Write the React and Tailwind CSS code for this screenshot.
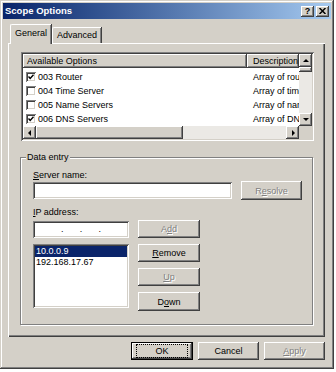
import React from 'react'

const raised =
  'shadow-[inset_-1px_-1px_#404040,inset_1px_1px_#ffffff,inset_-2px_-2px_#808080,inset_2px_2px_#d4d0c8]'
const sunken =
  'shadow-[inset_1px_1px_#808080,inset_-1px_-1px_#ffffff,inset_2px_2px_#404040,inset_-2px_-2px_#d4d0c8]'
const disabledText = 'text-[#808080] [text-shadow:1px_1px_#ffffff]'

function Arrow({ dir }) {
  const pts = {
    up: '1,5 4,2 7,5',
    down: '1,2 4,5 7,2',
    left: '5,1 2,4 5,7',
    right: '3,1 6,4 3,7',
  }
  return (
    <svg width="8" height="8" viewBox="0 0 8 8">
      <polygon points={pts[dir]} fill="#000" />
    </svg>
  )
}

function ScrollBtn({ dir }) {
  return (
    <div className={`w-[13px] h-[13px] shrink-0 bg-[#d4d0c8] flex items-center justify-center ${raised}`}>
      <Arrow dir={dir} />
    </div>
  )
}

function Checkbox({ checked }) {
  return (
    <div className={`w-[10px] h-[10px] shrink-0 bg-white flex items-center justify-center ${sunken}`}>
      {checked && (
        <svg width="6" height="6" viewBox="0 0 6 6">
          <path d="M0.5 2.5 L2.2 4.5 L5.5 0.8" stroke="#000" strokeWidth="1.4" fill="none" />
        </svg>
      )}
    </div>
  )
}

function Button({ children, className = '', disabled }) {
  return (
    <div
      className={`flex items-center justify-center bg-[#d4d0c8] ${raised} ${disabled ? disabledText : 'text-black'} ${className}`}
    >
      {children}
    </div>
  )
}

const options = [
  { label: '003 Router', desc: 'Array of router addresses', checked: true },
  { label: '004 Time Server', desc: 'Array of time server addresses', checked: false },
  { label: '005 Name Servers', desc: 'Array of name servers', checked: false },
  { label: '006 DNS Servers', desc: 'Array of DNS servers', checked: true },
]

export default function App() {
  return (
    <div className="w-[336px] h-[372px] bg-white font-['Liberation_Sans',Arial,sans-serif] text-[9px] leading-[10px] text-black">
      <div className="w-[334px] h-[369px] bg-[#d4d0c8] p-[3px] flex flex-col shadow-[inset_-1px_-1px_#404040,inset_1px_1px_#d4d0c8,inset_-2px_-2px_#808080,inset_2px_2px_#ffffff]">
        {/* title bar */}
        <div className="h-[16px] bg-linear-to-r from-[#0a246a] to-[#a6caf0] flex items-center pl-[2px] pr-[2px]">
          <span className="text-white font-bold text-[9.5px]">Scope Options</span>
          <div className="ml-auto flex gap-[2px]">
            <div className={`w-[13px] h-[11px] bg-[#d4d0c8] flex items-center justify-center font-bold text-[9px] ${raised}`}>
              ?
            </div>
            <div className={`w-[13px] h-[11px] bg-[#d4d0c8] flex items-center justify-center ${raised}`}>
              <svg width="7" height="6" viewBox="0 0 7 6">
                <path d="M0.5 0 L6.5 6 M6.5 0 L0.5 6" stroke="#000" strokeWidth="1.5" />
              </svg>
            </div>
          </div>
        </div>

        <div className="pl-[5px] pr-[6px] mt-[5px]">
          {/* tabs */}
          <div className="flex items-end h-[19px] pl-[2px]">
            <div className="relative z-10 h-[20px] -mb-[1px] w-[41px] bg-[#d4d0c8] border-t border-l border-white rounded-tl-[2px] shadow-[inset_-1px_0_#808080,1px_0_#404040] flex justify-center pt-[3px]">
              General
            </div>
            <div className="h-[16px] w-[49px] ml-[1px] bg-[#d4d0c8] border-t border-l border-white rounded-tl-[2px] shadow-[inset_-1px_0_#808080,1px_0_#404040] flex justify-center pt-[2px]">
              Advanced
            </div>
          </div>

          {/* tab panel */}
          <div className="h-[294px] border-t border-l border-white shadow-[inset_-1px_-1px_#404040,inset_-2px_-2px_#808080] pt-[8px] pl-[12px]">
            {/* options list */}
            <div className={`w-[293px] h-[89px] bg-white p-[2px] flex flex-col ${sunken}`}>
              <div className="flex h-[72px]">
                <div className="flex-1 flex flex-col">
                  <div className="flex h-[14px]">
                    <div className={`w-[224px] bg-[#d4d0c8] pl-[4px] flex items-center ${raised}`}>Available Options</div>
                    <div className={`w-[52px] bg-[#d4d0c8] pl-[6px] flex items-center overflow-hidden whitespace-nowrap ${raised}`}>
                      Description
                    </div>
                  </div>
                  <div className="pt-[2px]">
                    {options.map((o) => (
                      <div key={o.label} className="flex h-[14px] items-center">
                        <div className="w-[224px] flex items-center pl-[3px] gap-[2px]">
                          <Checkbox checked={o.checked} />
                          <span>{o.label}</span>
                        </div>
                        <div className="w-[52px] pl-[6px] overflow-hidden whitespace-nowrap">{o.desc}</div>
                      </div>
                    ))}
                  </div>
                </div>
                <div className="w-[13px] flex flex-col bg-[#ebe9e5]">
                  <ScrollBtn dir="up" />
                  <div className={`h-[5px] bg-[#d4d0c8] ${raised}`} />
                  <div className="flex-1" />
                  <ScrollBtn dir="down" />
                </div>
              </div>
              <div className="flex h-[13px]">
                <ScrollBtn dir="left" />
                <div className={`w-[147px] bg-[#d4d0c8] ${raised}`} />
                <div className="flex-1 bg-[#ebe9e5]" />
                <ScrollBtn dir="right" />
                <div className="w-[13px] bg-[#d4d0c8]" />
              </div>
            </div>

            {/* data entry group */}
            <div className="relative mt-[16px] -ml-[1px] w-[293px] h-[168px] border border-[#808080] shadow-[1px_1px_#ffffff,inset_1px_1px_#ffffff] pl-[12px] pt-[12px]">
              <span className="absolute -top-[6px] left-[5px] px-[1px] bg-[#d4d0c8]">Data entry</span>
              <div>
                <span className="underline">S</span>erver name:
              </div>
              <div className="flex items-center mt-[1px]">
                <div className={`w-[199px] h-[17px] bg-white ${sunken}`} />
                <Button disabled className="ml-[9px] w-[61px] h-[19px]">
                  R<span className="underline">e</span>solve
                </Button>
              </div>
              <div className="mt-[7px]">
                <span className="underline">I</span>P address:
              </div>
              <div className="flex items-center mt-[3px]">
                <div className={`w-[96px] h-[17px] bg-white flex items-center justify-around px-[20px] ${sunken}`}>
                  <span>.</span>
                  <span>.</span>
                  <span>.</span>
                </div>
                <Button disabled className="ml-[9px] w-[62px] h-[18px]">
                  A<span className="underline">d</span>d
                </Button>
              </div>
              <div className="flex mt-[6px]">
                <div className={`w-[96px] h-[64px] bg-white p-[2px] ${sunken}`}>
                  <div className="h-[11px] bg-[#0a246a] text-white pl-[1px] leading-[11px]">10.0.0.9</div>
                  <div className="h-[11px] pl-[1px] leading-[11px]">192.168.17.67</div>
                </div>
                <div className="ml-[9px] flex flex-col gap-[6px]">
                  <Button className="w-[62px] h-[18px]">
                    <span className="underline">R</span>emove
                  </Button>
                  <Button disabled className="w-[62px] h-[18px]">
                    <span className="underline">U</span>p
                  </Button>
                  <Button className="w-[62px] h-[19px]">
                    D<span className="underline">o</span>wn
                  </Button>
                </div>
              </div>
            </div>
          </div>

          {/* bottom buttons */}
          <div className="flex justify-end gap-[5px] mt-[5px]">
            <div className="w-[62px] h-[18px] border border-black">
              <Button className="w-full h-full">
                <span className="px-[18px] py-[1px] outline outline-1 outline-dotted outline-black -outline-offset-0">OK</span>
              </Button>
            </div>
            <Button className="w-[61px] h-[18px]">Cancel</Button>
            <Button disabled className="w-[61px] h-[18px]">
              <span className="underline">A</span>pply
            </Button>
          </div>
        </div>
      </div>
    </div>
  )
}
